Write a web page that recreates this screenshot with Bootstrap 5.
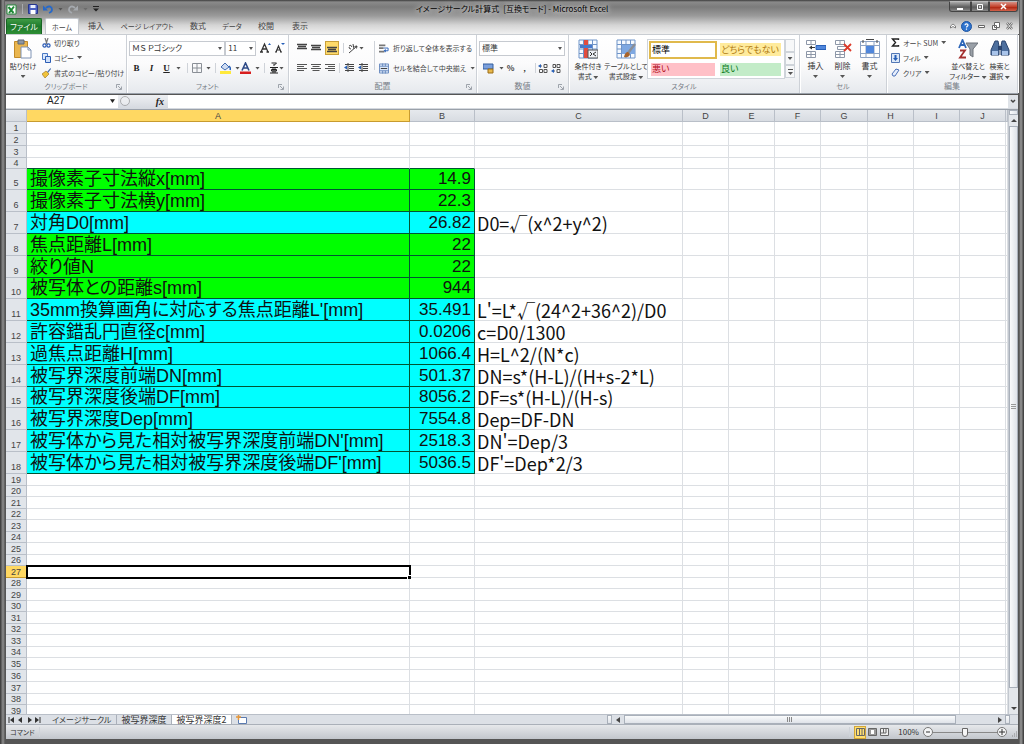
<!DOCTYPE html>
<html lang="ja">
<head>
<meta charset="utf-8">
<meta name="viewport" content="width=device-width, initial-scale=1">
<title>イメージサークル計算式 - Microsoft Excel</title>
<link href="https://cdn.jsdelivr.net/npm/bootstrap@5.3.0/dist/css/bootstrap.min.css" rel="stylesheet">
<style>
:root{--ui:"Noto Sans CJK JP",sans-serif;--line:#b4bac3}
body{font-family:var(--ui);font-size:8px;line-height:10px;color:#333;font-feature-settings:"palt";background:#4a4a4a}
button,input,select{font:inherit;font-feature-settings:inherit;color:inherit}
svg{display:block;flex:none}
.frame{padding:0 6px 5px;background:linear-gradient(90deg,#333 0,#8f8f8f 3px,#555 5px,#555 calc(100% - 5px),#999 calc(100% - 3px),#333)}
.tool{display:inline-flex;align-items:center;justify-content:center;flex:none;border:0;padding:0;background:none;white-space:nowrap;text-decoration:none;color:#444}
.tight{font-size:7px}
.caret{width:5px;height:3px;background:#555;clip-path:polygon(0 0,100% 0,50% 100%);flex:none;display:inline-block}
.cslot{width:9px;height:12px}
.vsep{width:1px;height:10px;background:#cfd3d9;flex:none}
.serif{font-family:"Liberation Serif",serif;font-size:9px;font-weight:700;width:15px;color:#222}
/* title */
.chrome{background:linear-gradient(#3c3c3c 0,#8a8a8a 2px,#7b7b7b 7px,#9b9b9b 16px,#d4d4d4 25px,#f0f0f0 34px);margin:0 -1px;padding:0 1px}
.titlebar{height:18px}
.titletext{color:#000;text-shadow:0 0 4px #ddd,0 0 6px #ddd}
.qat{gap:5px;width:200px}
.winbtns{width:200px;align-self:flex-start;margin-top:1px}
.winbtns button{height:11px;width:18px;background:linear-gradient(#aaa,#666 50%,#555 51%,#888);border:1px solid #444;border-top-color:#bbb}
.winbtns button:first-child{width:22px;border-radius:0 0 0 3px}
.winbtns .shut{width:29px;background:linear-gradient(#d79287,#c4442e 50%,#a91e0b 51%,#d2614a);border-radius:0 0 3px 0}
.tabs{height:16px}
.tabs>.tool{width:34px;height:16px}
.tabs>.wide{width:68px}
.tabs>.file{width:36px;background:linear-gradient(#3f9b45,#1d7a2c 50%,#2f8f35);color:#fff;border:1px solid #176423;border-bottom:0;border-radius:2px 2px 0 0;margin-right:3px}
.tabs>.on{background:#fff;border-radius:2px 2px 0 0;border:1px solid #c5c9cf;border-bottom:0}
/* ribbon */
.ribbon{background:linear-gradient(#fff,#fbfbfc 50%,#e6e9ed);border-top:1px solid #c9cdd2;border-bottom:1px solid #9aa1aa;height:60px}
.grp{border-right:1px solid #cdd1d7;box-shadow:1px 0 #fff;display:flex;flex-direction:column;flex:none}
.grp-body{height:45px;padding:6px 3px 0 2px}
.grp-name{height:11px;color:#777d86;display:flex;align-items:center;justify-content:center;position:relative}
.corner{position:absolute;right:4px;top:4px;width:6px;height:6px}
.trow{display:flex;align-items:center;height:14px;margin-bottom:6px}
.small3{display:flex;align-items:center;height:15px;gap:3px}
.big{flex-direction:column;justify-content:flex-start;color:#333;line-height:10px}
.big svg{margin-bottom:2px}
.combo{height:15px;min-height:0;border:1px solid #c6cad0;border-radius:0;padding:0 8px 0 2px;font-size:8px;line-height:12px;background:#fff url("data:image/svg+xml,%3Csvg xmlns='http://www.w3.org/2000/svg' viewBox='0 0 4 3'%3E%3Cpath d='M0 0h4L2 3z' fill='%23555'/%3E%3C/svg%3E") no-repeat right 2px center/4px 3px;appearance:none}
.gallery{border:1px solid #cfd4da;background:#fff;display:grid;grid-template-columns:68px 65px;column-gap:1px;row-gap:1px;align-items:center;padding:0 1px;width:138px;height:40px}
.gallery button{border:2px solid transparent;padding:0 1px;text-align:left;font-size:9px;line-height:12px;height:17px;background-clip:padding-box;white-space:nowrap}
.gallery .sel{border-color:#e0b94c;height:18px;background:#fff;color:#000}
.gallery .neutral{background-color:#ffeb9c;color:#b07a10}
.gallery .bad{background-color:#ffc0c7;color:#b30f1c}
.gallery .good{background-color:#c3ecc8;color:#0c7a1c}
.galbar button{height:13px;width:10px;border:1px solid #cfd4da;background:#f7f8f9}
/* formula bar */
.fbar{height:13px;margin-top:1px;background:#dfe3e8}
.fbar input{border:0;padding:0;background:#fff;min-width:0;border-radius:0}
.fbar .namebox{width:112px;text-align:center;padding-right:12px;font:10px/12px "Liberation Sans",sans-serif;color:#222;background:#fff url("data:image/svg+xml,%3Csvg xmlns='http://www.w3.org/2000/svg' viewBox='0 0 4 3'%3E%3Cpath d='M0 0h4L2 3z' fill='%23222'/%3E%3C/svg%3E") no-repeat right 3px center/5px 4px}
.fxarea{width:50px;background:linear-gradient(#eef0f3,#d6dae0);padding:0 4px 0 2px}
.fxarea .tool{font:italic bold 10px "Liberation Serif",serif;color:#222}
.strip{height:1px;background:#d5d9df}
/* sheet */
.sheetwrap{border-top:1px solid #9aa1aa;background:#fff;min-height:0}
.sheet{table-layout:fixed;border-collapse:separate;border-spacing:0;width:100%}
.sheet th,.sheet td{padding:0;border:0 solid #dcdfe3;border-width:0 1px 1px 0;white-space:nowrap;line-height:10px}
.sheet th{background:#e1e5ea;border-color:#b9bfc8;font:9px/9px "Liberation Sans",sans-serif;color:#444;text-align:center;vertical-align:bottom;overflow:hidden}
.sheet thead th{height:12px;background:linear-gradient(#e6e9ed,#d8dce2)}
.sheet .hot{background:#ffd862!important;border-color:#c79b2f}
.sheet tbody tr{height:12px}
.sheet tbody tr:nth-child(even){height:11px}
.sheet tbody tr:nth-child(2),.sheet tbody tr:nth-child(36){height:12px}
.sheet tbody tr.calc{height:22px}
.sheet tbody tr.calc:nth-child(5n){height:21px}
.sheet .calc th{padding-bottom:1px}
.sheet .calc td{font-size:18px;line-height:20px;color:#111;vertical-align:bottom}
.sheet .calc .label-cell{font-family:"Liberation Sans","Noto Sans CJK JP",sans-serif;padding-left:3px;border-color:#053}
.sheet .calc .num-cell{font-family:"Liberation Sans",sans-serif;font-size:17px;text-align:right;padding-right:3px;border-color:#053}
.sheet .calc .form-cell{padding-left:2px}
.given .label-cell,.given .num-cell{background:#0f0}
.derived .label-cell,.derived .num-cell{background:#0ff}
.sheet .edge td:nth-child(2),.sheet .edge td:nth-child(3){border-bottom-color:#053}
.sheet .picked{outline:2px solid #000;outline-offset:-1px;position:relative}
.picked::after{content:"";position:absolute;right:-2px;bottom:-2px;width:4px;height:4px;background:#000;border:solid #fff;border-width:1px 0 0 1px}
.vbar{width:10px;background:#e4e7eb;border-left:1px solid #c3c8cf}
.knob{border:1px solid #a9b0ba;background:linear-gradient(90deg,#fafbfc,#dfe3e9)}
.hknob{border:1px solid #a9b0ba;background:linear-gradient(#fafbfc,#dfe3e9)}
.bottombar{height:10px;background:#dce0e6;border-top:1px solid #b9bfc8}
.stab{height:9px;padding:0 5px 0 4px;color:#333;border-right:1px solid #aab0ba;font-size:9px}
.stab.long{font-size:8px}
.stab.on{background:#fff}
.hscroll{width:411px}
.status{height:15px;background:linear-gradient(#e6e8eb,#c2c6cc);border-top:1px solid #aab0b9}
.view{width:12px;height:13px}
.view.on{background:#ffdf72;border:1px solid #d2a637}
.zoomer{appearance:none;width:64px;height:10px;background:linear-gradient(#888,#888) center/100% 1px no-repeat;margin:0}
.zoomer::-webkit-slider-thumb{appearance:none;width:6px;height:9px;background:#f6f6f6;border:1px solid #666;border-radius:0 0 3px 3px}
.round-btn{width:10px;height:10px;border:1px solid #777;border-radius:50%;background:#f4f5f6}
</style>
</head>
<body>
<svg width="0" height="0" class="position-absolute" aria-hidden="true">
<symbol id="i-left" viewBox="0 0 10 10"><path d="M0 1.5h10M0 3.5h7M0 5.5h10M0 7.5h7" stroke="#555"/></symbol>
<symbol id="i-center" viewBox="0 0 10 10"><path d="M0 1.5h10M1.5 3.5h7M0 5.5h10M1.5 7.5h7" stroke="#555"/></symbol>
<symbol id="i-right" viewBox="0 0 10 10"><path d="M0 1.5h10M3 3.5h7M0 5.5h10M3 7.5h7" stroke="#555"/></symbol>
<symbol id="i-three" viewBox="0 0 10 10"><path d="M0 2.5h10M1 4.500h8M0 6.500h10" stroke="#444" stroke-width="1.400"/></symbol>
<symbol id="i-indent" viewBox="0 0 10 10"><path d="M1 1.5h9M5 3.5h5M5 5.5h5M1 7.5h9M4 0v9" stroke="#444"/><path d="M0 4.5l3-2v4z" fill="#2860b8"/></symbol>
<symbol id="i-corner" viewBox="0 0 6 6"><path d="M.5 4V.5H4M2 2l3 3M5.5 2.5v3h-3" fill="none" stroke="#8a9099" stroke-width=".8"/></symbol>
<symbol id="i-grid" viewBox="0 0 20 20"><path d="M1 1h18v18H1z" fill="#f6faff"/><path d="M1 1h18v18H1zM1 5.5h18M1 10h18M1 14.5h18M5.5 1v18M10 1v18M14.5 1v18" fill="none" stroke="#6f94c8"/></symbol>
</svg>

<div class="frame vh-100 d-flex flex-column overflow-hidden">
<header class="chrome">
  <div class="titlebar d-flex align-items-center justify-content-between">
    <div class="qat d-flex align-items-center">
      <svg width="11" height="11" viewBox="0 0 11 11"><path d="M1 1h9v9H1z" fill="#fff" stroke="#2b8a3e"/><path d="M2.5 3l5 6M8 2.5l-5 6.5" stroke="#1f8a36" stroke-width="2"/></svg>
      <span class="vsep opacity-50"></span>
      <button class="tool" aria-label="保存"><svg width="10" height="10" viewBox="0 0 10 10"><path d="M.5.5h8l1 1v8h-9z" fill="#4a5fc0" stroke="#27368c"/><path d="M2.5 1h5v3h-5z" fill="#e9eefc"/><path d="M2.5 6h5v4h-5z" fill="#fff"/></svg></button>
      <button class="tool" aria-label="元に戻す"><svg width="10" height="10" viewBox="0 0 10 10"><path d="M3 4c3-3 6-1 6 1.500S7 8.500 6 9" fill="none" stroke="#2769c9" stroke-width="1.800"/><path d="M0 1.500v5h5z" fill="#2769c9"/></svg></button>
      <span class="caret"></span>
      <button class="tool" aria-label="やり直し"><svg width="10" height="10" viewBox="0 0 10 10"><path d="M7 4C4 1 1 3 1 5.500S3 8.500 4 9" fill="none" stroke="#a5a9ae" stroke-width="1.800"/><path d="M10 1.500v5H5z" fill="#a5a9ae"/></svg></button>
      <span class="caret opacity-50"></span>
      <button class="tool" aria-label="カスタマイズ"><svg width="6" height="6" viewBox="0 0 6 6"><path d="M0 .5h6" stroke="#222"/><path d="M0 2.500h6l-3 3z" fill="#222"/></svg></button>
    </div>
    <div class="titletext">イメージサークル計算式&ensp;[互換モード] - Microsoft Excel</div>
    <div class="winbtns d-flex justify-content-end">
      <button class="tool" aria-label="最小化"><svg width="8" height="8"><path d="M1 5h6v2H1z" fill="#fff"/></svg></button>
      <button class="tool" aria-label="元のサイズに戻す"><svg width="8" height="8"><path d="M1.500 1.500h5v5h-5z" fill="none" stroke="#fff"/><path d="M3.500 3.500h1v1h-1z" stroke="#fff"/></svg></button>
      <button class="tool shut" aria-label="閉じる"><svg width="7" height="7"><path d="M1 1l5 5M6 1L1 6" stroke="#fff" stroke-width="1.500"/></svg></button>
    </div>
  </div>
  <nav class="tabs d-flex">
    <button class="tool file">ファイル</button><a href="#" class="tool on tight">ホーム</a><a href="#" class="tool">挿入</a><a href="#" class="tool wide tight">ページ レイアウト</a><a href="#" class="tool">数式</a><a href="#" class="tool tight">データ</a><a href="#" class="tool">校閲</a><a href="#" class="tool">表示</a>
    <div class="ms-auto d-flex align-items-center gap-1 pe-1">
      <button class="tool" aria-label="リボンの最小化"><svg width="8" height="8"><path d="M1.500 6V4L4 2l2.500 2v2L4 4.500z" fill="#fff" stroke="#666" stroke-width=".8"/></svg></button>
      <button class="tool" aria-label="ヘルプ"><svg width="11" height="11"><circle cx="5.500" cy="5.500" r="5" fill="#2f74ce" stroke="#1e54a0"/><path d="M4 4.300C4 2.500 7 2.500 7 4.200 7 5.300 5.500 5.300 5.500 6.500M5.500 7.500v1.200" fill="none" stroke="#fff" stroke-width="1.200"/></svg></button>
      <button class="tool" aria-label="ブックの最小化"><svg width="11" height="8"><path d="M2.500 3.500h6v2h-6z" fill="#fff" stroke="#666"/></svg></button>
      <button class="tool" aria-label="ブックを元に戻す"><svg width="10" height="9"><path d="M3.500.5h5v5h-5zM1.500 3.500h4v4h-4z" fill="#fff" stroke="#666"/></svg></button>
      <button class="tool" aria-label="ブックを閉じる"><svg width="9" height="8"><path d="M2 1l5 6M7 1L2 7" stroke="#666" stroke-width="2.400"/><path d="M2 1l5 6M7 1L2 7" stroke="#fff" stroke-width=".8"/></svg></button>
    </div>
  </nav>
</header>

<section class="ribbon d-flex">
  <div class="grp" style="width:121px">
    <div class="grp-body d-flex pt-0 tight">
      <button class="tool big pt-1" style="width:30px"><svg width="20" height="20" viewBox="0 0 20 20"><path d="M1.500 2.500h13v16h-13z" fill="#eab64f" stroke="#c28b2a"/><path d="M5 1h6v4H5z" fill="#8d97a5" stroke="#5f6977"/><path d="M8 8h7l3 3v8H8z" fill="#fff" stroke="#7f93b5"/><path d="M15 8v3h3" fill="none" stroke="#7f93b5"/></svg>貼り付け<span class="caret mt-1"></span></button>
      <div class="ps-1">
        <button class="tool small3"><svg width="9" height="10" viewBox="0 0 9 10"><path d="M3 0l2 6M6 0L4 6" stroke="#777" stroke-width="1.200"/><circle cx="2.500" cy="7.500" r="1.600" fill="none" stroke="#2a5ab5" stroke-width="1.200"/><circle cx="6.500" cy="7.500" r="1.600" fill="none" stroke="#2a5ab5" stroke-width="1.200"/></svg>切り取り</button>
        <button class="tool small3"><svg width="9" height="10" viewBox="0 0 9 10"><path d="M.5.5h5v6h-5z" fill="#dbe8fb" stroke="#4a78c4"/><path d="M3.500 3.500h5v6h-5z" fill="#cfe0fa" stroke="#2c5db5"/></svg>コピー <span class="caret"></span></button>
        <button class="tool small3"><svg width="9" height="10" viewBox="0 0 9 10"><path d="M8.500 0L5 4l1 1 3-4z" fill="#4a6fae"/><path d="M0 6l4-3 3 3-4 4z" fill="#f0c33c" stroke="#9b6d16" stroke-width=".6"/></svg>書式のコピー/貼り付け</button>
      </div>
    </div>
    <div class="grp-name tight">クリップボード<svg class="corner"><use href="#i-corner"/></svg></div>
  </div>

  <div class="grp" style="width:162px">
    <div class="grp-body">
      <div class="trow">
        <select class="combo" style="width:98px" aria-label="フォント名"><option>ＭＳ Ｐゴシック</option></select>
        <select class="combo" style="width:31px" aria-label="フォント サイズ"><option>11</option></select>
        <button class="tool ms-1" aria-label="拡大"><svg width="11" height="12" viewBox="0 0 11 12"><path d="M1 10L4.500 2 8 10M2.500 7h4M0 10h3M6.500 10H9" fill="none" stroke="#333" stroke-width="1.300"/><path d="M8 3l1.500-2L11 3z" fill="#2860b8"/></svg></button>
        <button class="tool ms-1" aria-label="縮小"><svg width="10" height="12" viewBox="0 0 10 12"><path d="M1 10L3.500 4 6 10M2 8h3M0 10h2M5 10h2" fill="none" stroke="#333" stroke-width="1.200"/><path d="M6 1h4L8 3z" fill="#2860b8"/></svg></button>
      </div>
      <div class="trow">
        <button class="tool serif">B</button>
        <button class="tool serif fst-italic">I</button>
        <button class="tool serif text-decoration-underline">U</button>
        <button class="tool cslot" aria-label="下線"><span class="caret"></span></button><span class="vsep mx-1"></span>
        <button class="tool" aria-label="罫線"><svg width="10" height="10"><path d="M.5.5h9v9h-9zM5 0v10M0 5h10" fill="none" stroke="#8a8f96"/></svg><span class="caret ms-1"></span></button><span class="vsep mx-1"></span>
        <button class="tool" aria-label="塗りつぶし"><svg width="11" height="12" viewBox="0 0 11 12"><path d="M0 9h11v3H0z" fill="#ffe93b"/><path d="M1 5l4-4 4 4-4 3z" fill="#cfdcf2" stroke="#416bb0"/><path d="M9 4q2 2 1 4" fill="none" stroke="#2860b8" stroke-width="1.500"/></svg><span class="caret ms-1"></span></button>
        <button class="tool" aria-label="文字の色"><svg width="11" height="12" viewBox="0 0 11 12"><path d="M0 9.500h11V12H0z" fill="#d81e1e"/><path d="M2 8.500L5.500 1 9 8.500M3.500 6h4" fill="none" stroke="#2e4a86" stroke-width="1.600"/></svg><span class="caret ms-1"></span></button><span class="vsep mx-1"></span>
        <button class="tool" aria-label="ふりがな"><svg width="10" height="12" viewBox="0 0 10 12"><path d="M2.500 1h5L5.500 3M5 2v2M1 5.500h8M1 11h8M2.500 7.500h5v1.500h-5zM4 5.500V11M6 5.500V11" fill="none" stroke="#222"/></svg><span class="caret"></span></button>
      </div>
    </div>
    <div class="grp-name tight">フォント<svg class="corner"><use href="#i-corner"/></svg></div>
  </div>

  <div class="grp" style="width:188px">
    <div class="grp-body d-flex ps-1">
      <div class="flex-shrink-0" style="width:81px">
        <div class="trow ps-1">
          <button class="tool me-1" aria-label="上揃え"><svg width="10" height="12" viewBox="0 1 10 10"><use href="#i-three" width="10" height="10"/></svg></button>
          <button class="tool me-1" aria-label="上下中央揃え"><svg width="10" height="10"><use href="#i-three"/></svg></button>
          <button class="tool" aria-label="下揃え" style="width:14px;height:14px;background:#ffdb6b;border:1px solid #c9a03a"><svg width="10" height="10" viewBox="0 -2 10 10"><use href="#i-three" width="10" height="10"/></svg></button><span class="vsep mx-1"></span>
          <button class="tool" aria-label="方向"><svg width="11" height="11" viewBox="0 0 11 11"><path d="M1 10L9 3M9 3L6.500 3.500M9 3l-.5 2.500M1 3q2-2 3 1M3 6q-2 0-2-2M5 1l1 5" fill="none" stroke="#444"/></svg><span class="caret"></span></button>
        </div>
        <div class="trow ps-1">
          <button class="tool me-1" aria-label="左揃え"><svg width="10" height="10"><use href="#i-left"/></svg></button>
          <button class="tool me-1" aria-label="中央揃え"><svg width="10" height="10"><use href="#i-center"/></svg></button>
          <button class="tool me-1" aria-label="右揃え"><svg width="10" height="10"><use href="#i-right"/></svg></button><span class="vsep me-1"></span>
          <button class="tool me-1" aria-label="インデントを減らす"><svg width="10" height="10"><use href="#i-indent"/></svg></button>
          <button class="tool" aria-label="インデントを増やす"><svg width="10" height="10"><use href="#i-indent"/></svg></button>
        </div>
      </div>
      <span class="vsep h-75 me-1"></span>
      <div class="tight">
        <div class="trow"><button class="tool"><svg class="me-1" width="10" height="11" viewBox="0 0 11 11"><path d="M0 2h7M0 5h5M0 9h6" stroke="#777" stroke-width="2"/><path d="M5 5h5v3H7" fill="none" stroke="#2860b8"/><path d="M7.500 6v4L5 8z" fill="#2860b8"/></svg>折り返して全体を表示する</button></div>
        <div class="trow"><button class="tool"><svg class="me-1" width="10" height="11" viewBox="0 0 11 11"><path d="M.5.5h10v10H.5zM0 3h11M0 8h11M4 0v3M7 0v3M4 8v3M7 8v3" fill="#dce8f8" stroke="#6487bd"/><path d="M2 5.500h7" stroke="#333"/></svg>セルを結合して中央揃え<span class="caret ms-1"></span></button></div>
      </div>
    </div>
    <div class="grp-name">配置<svg class="corner"><use href="#i-corner"/></svg></div>
  </div>

  <div class="grp" style="width:92px">
    <div class="grp-body">
      <div class="trow"><select class="combo w-100" aria-label="表示形式"><option>標準</option></select></div>
      <div class="trow justify-content-between px-1">
        <button class="tool" aria-label="通貨"><svg width="12" height="11" viewBox="0 0 12 11"><path d="M0 1h10v5H0z" fill="#7ba0dc" stroke="#355f9f"/><path d="M5 6h5v4H5z" fill="#e8b84a" stroke="#9b6d16"/></svg><span class="caret ms-1"></span></button>
        <button class="tool fw-bold">%</button><button class="tool serif">,</button><span class="vsep"></span>
        <button class="tool" aria-label="小数点を増やす"><svg width="10" height="11" viewBox="0 0 10 11"><path d="M0 3l3-2v4z" fill="#2860b8"/><path d="M3 3h1M6 1.500h3v3H6zM1.500 6.500h3v3h-3zM6 6.500h3v3H6z" fill="none" stroke="#555"/></svg></button>
        <button class="tool" aria-label="小数点を減らす"><svg width="10" height="11" viewBox="0 0 10 11"><path d="M0 8l3-2v4z" fill="#2860b8"/><path d="M3 8h1M2 1.500h2.500v3H2zM6 1.500h3v3H6zM6 6.500h3v3H6z" fill="none" stroke="#555"/></svg></button>
      </div>
    </div>
    <div class="grp-name">数値<svg class="corner"><use href="#i-corner"/></svg></div>
  </div>

  <div class="grp" style="width:231px">
    <div class="grp-body d-flex pt-1 pe-0">
      <button class="tool big tight" style="width:34px"><svg width="20" height="20" viewBox="0 0 20 20"><use href="#i-grid"/><path d="M6 1h4v18H6z" fill="#e14c3f"/><path d="M2 6h12v3H2z" fill="#4779cc"/><path d="M10 11h10v8H10z" fill="#eef1f6" stroke="#555"/><path d="M12 13l2 2-2 2M18 13l-3 2 3 2" fill="none" stroke="#333"/></svg>条件付き<span>書式 <span class="caret"></span></span></button>
      <button class="tool big tight" style="width:42px"><svg width="20" height="20" viewBox="0 0 20 20"><use href="#i-grid"/><path d="M6 6h13v9H6z" fill="#7ea8e2"/><path d="M19 5l-7 9" stroke="#8a8f98" stroke-width="2.500"/><path d="M8 18q1-5 4-5l2 2q-1 4-6 3z" fill="#a8632a"/></svg>テーブルとして<span>書式設定 <span class="caret"></span></span></button>
      <div class="gallery">
        <button class="sel">標準</button><button class="neutral">どちらでもない</button>
        <button class="bad">悪い</button><button class="good">良い</button>
      </div>
      <div class="galbar d-flex flex-column">
        <button class="tool" aria-label="上へ"></button><button class="tool" aria-label="下へ"><span class="caret"></span></button><button class="tool" aria-label="その他"><svg width="5" height="6"><path d="M0 .5h5" stroke="#555"/><path d="M0 3h5L2.500 6z" fill="#555"/></svg></button>
      </div>
    </div>
    <div class="grp-name tight">スタイル</div>
  </div>

  <div class="grp" style="width:87px">
    <div class="grp-body d-flex pt-1">
      <button class="tool big" style="width:27px"><svg width="20" height="20" viewBox="0 0 20 20"><path d="M.5 1.500h9v4h-9zM.5 12.500h9v6h-9zM5 1v4M5 12v7M0 15.500h10" fill="#fff" stroke="#8d97a8"/><path d="M10 6.500h10v4H10z" fill="#4f86dc" stroke="#2860b8"/><path d="M9 8.500H5" stroke="#333"/><path d="M3 8.500l3-2v4z" fill="#333"/></svg>挿入<span class="caret mt-1"></span></button>
      <button class="tool big" style="width:27px"><svg width="20" height="20" viewBox="0 0 20 20"><path d="M2.500 1.500h9v4h-9zM4.500 7.500h9v3h-9zM2.500 12.500h9v6h-9zM7 1v4M7 12v7M2 15.500h10" fill="#fff" stroke="#8d97a8"/><path d="M11 5l7 7M18 5l-7 7" stroke="#dd3a2a" stroke-width="1.800"/></svg>削除<span class="caret mt-1"></span></button>
      <button class="tool big" style="width:27px"><svg width="20" height="20" viewBox="0 0 20 20"><path d="M.5 2.500h19v16H.500zM0 6.500h20M0 14.500h20M6 2v16M14 2v16" fill="#fff" stroke="#8da3c4"/><path d="M6 7h8v7H6z" fill="#4f86dc"/><path d="M6 .5h8M3 1v3M17 1v3" stroke="#444"/></svg>書式<span class="caret mt-1"></span></button>
    </div>
    <div class="grp-name tight">セル</div>
  </div>

  <div class="grp flex-grow-1">
    <div class="grp-body d-flex pt-0 ps-1 tight">
      <div style="width:59px">
        <button class="tool small3"><svg width="9" height="9" viewBox="0 0 8 9"><path d="M7 2V1H1l3 3.500L1 8h6V7" fill="none" stroke="#222" stroke-width="1.400"/></svg>オート SUM<span class="caret"></span></button>
        <button class="tool small3"><svg width="9" height="10"><path d="M.5.500h8v9h-8z" fill="#dce8f8" stroke="#5277b5"/><path d="M3.500 2h2v3H7L4.500 8 2 5h1.500z" fill="#2860b8"/></svg>フィル<span class="caret"></span></button>
        <button class="tool small3"><svg width="9" height="9"><path d="M1 6l4-5 3 1-4 6H2z" fill="#e6eefc" stroke="#4a70b8"/></svg>クリア<span class="caret"></span></button>
      </div>
      <button class="tool big pt-1" style="width:36px"><svg width="20" height="20" viewBox="0 0 20 20"><path d="M1 9L4.500 1 8 9M2.500 6h4" fill="none" stroke="#2d66b8" stroke-width="1.800"/><path d="M2 11.500h5L2 18.500h6" fill="none" stroke="#a43030" stroke-width="1.800"/><path d="M8 4h12l-5 6v8l-3-2v-6z" fill="#9aa0a8" stroke="#6d737b"/></svg>並べ替えと<span>フィルター <span class="caret"></span></span></button>
      <button class="tool big pt-1" style="width:27px"><svg width="20" height="20" viewBox="0 0 20 20"><path d="M5 2h3l1 5v9H1v-5zM12 2h3l4 9v5h-8V7z" fill="#4d6f9e" stroke="#2a446e"/><path d="M8 7h4v4H8z" fill="#2a446e"/><path d="M2 12h6v4H2zM12 12h6v4h-6z" fill="#a9c4ea"/></svg>検索と<span>選択 <span class="caret"></span></span></button>
    </div>
    <div class="grp-name">編集</div>
  </div>
</section>

<section class="fbar d-flex flex-shrink-0">
  <input class="namebox" value="A27" aria-label="名前ボックス">
  <div class="fxarea d-flex align-items-center justify-content-between"><span class="round-btn opacity-50"></span><button class="tool">fx</button></div>
  <input class="flex-grow-1" aria-label="数式バー">
  <button class="tool" style="width:10px" aria-label="数式バーの展開"><svg width="6" height="5"><path d="M1 1l2 2 2-2" fill="none" stroke="#444" stroke-width="1.500"/></svg></button>
</section>
<div class="strip flex-shrink-0"></div>

<main class="sheetwrap d-flex flex-grow-1 overflow-hidden">
  <div class="flex-grow-1 overflow-hidden">
    <table class="sheet">
      <colgroup><col style="width:21px"><col style="width:383px"><col style="width:65px"><col style="width:208px"><col style="width:46px"><col style="width:46px"><col style="width:46px"><col style="width:47px"><col style="width:46px"><col style="width:46px"><col style="width:46px"><col></colgroup>
      <thead><tr><th></th><th class="hot">A</th><th>B</th><th>C</th><th>D</th><th>E</th><th>F</th><th>G</th><th>H</th><th>I</th><th>J</th><th></th></tr></thead>
      <tbody id="rows"></tbody>
    </table>
  </div>
  <div class="vbar d-flex flex-column align-items-center flex-shrink-0">
    <span class="knob w-100 flex-shrink-0" style="height:5px"></span>
    <svg width="8" height="11"><path d="M1 7h6L4 4z" fill="#444"/></svg>
    <div class="knob w-100 d-flex align-items-center justify-content-center" style="height:93%"><svg width="5" height="6"><path d="M0 .5h5M0 2.500h5M0 4.500h5" stroke="#999"/></svg></div>
    <svg class="mt-auto" width="8" height="11"><path d="M1 4h6L4 7z" fill="#444"/></svg>
  </div>
</main>

<footer class="flex-shrink-0">
  <div class="bottombar d-flex align-items-center">
    <svg width="38" height="8" class="me-1"><path d="M3 1v6M34 1v6" stroke="#333"/><path d="M8 1v6L4 4zM16 1v6l-4-3zM22 1v6l4-3zM29 1v6l4-3z" fill="#333"/></svg>
    <a href="#" class="tool stab long">イメージサークル</a><a href="#" class="tool stab">被写界深度</a><a href="#" class="tool stab on">被写界深度2</a>
    <button class="tool ms-1" aria-label="ワークシートの挿入"><svg width="12" height="9"><path d="M2.500 2.500h8v6h-8z" fill="#fff" stroke="#5b7bb0"/><path d="M0 2h5M2.500 0v5" stroke="#e5963a" stroke-width="1.500"/></svg></button>
    <div class="hscroll ms-auto d-flex align-items-center h-100">
      <span class="hknob h-100" style="width:5px"></span><svg width="12" height="8"><path d="M8 1v6L4 4z" fill="#444"/></svg>
      <div class="hknob h-100 d-flex align-items-center justify-content-center" style="width:332px"><svg width="6" height="5"><path d="M.5 0v5M2.500 0v5M4.500 0v5" stroke="#888"/></svg></div>
      <svg class="ms-auto" width="10" height="8"><path d="M3 1v6l4-3z" fill="#444"/></svg><span class="hknob h-100 me-2" style="width:5px"></span>
    </div>
  </div>
  <div class="status d-flex align-items-center ps-1">
    <span class="tight">コマンド</span><span class="vsep ms-1"></span>
    <span class="vsep ms-auto me-1"></span>
    <button class="tool view on" aria-label="標準"><svg width="9" height="8"><path d="M.5.500h8v7h-8zM3.500 0v8M6 0v8" fill="none" stroke="#666"/></svg></button>
    <button class="tool view" aria-label="ページ レイアウト"><svg width="9" height="8"><path d="M.5.500h8v7h-8z" fill="#999" stroke="#666"/><path d="M3 2h3v4H3z" fill="#fff"/></svg></button>
    <button class="tool view" aria-label="改ページ"><svg width="9" height="8"><path d="M.5.500h8v7h-8z" fill="#eee" stroke="#666"/><path d="M3.500 0v5M6 0v5H0" fill="none" stroke="#666"/></svg></button>
    <span class="ms-2 me-1">100%</span>
    <button class="tool round-btn" aria-label="縮小"><svg width="6" height="6"><path d="M1 3h4" stroke="#333"/></svg></button>
    <input type="range" class="zoomer" aria-label="ズーム">
    <button class="tool round-btn" aria-label="拡大"><svg width="6" height="6"><path d="M0 3h6M3 0v6" stroke="#333"/></svg></button>
    <svg class="ms-1 align-self-end" width="7" height="8"><path d="M5 1h1M3 3h1M5 3h1M1 5h1M3 5h1M5 5h1" stroke="#888"/></svg>
  </div>
</footer>
</div>

<script>
const calc = {
  5:['given','撮像素子寸法縦x[mm]','14.9',''],
  6:['given','撮像素子寸法横y[mm]','22.3',''],
  7:['derived','対角D0[mm]','26.82','D0=√(x^2+y^2)'],
  8:['given','焦点距離L[mm]','22',''],
  9:['given','絞り値N','22',''],
  10:['given','被写体との距離s[mm]','944',''],
  11:['derived',"35mm換算画角に対応する焦点距離L'[mm]",'35.491',"L'=L*√(24^2+36^2)/D0"],
  12:['derived','許容錯乱円直径c[mm]','0.0206','c=D0/1300'],
  13:['derived','過焦点距離H[mm]','1066.4','H=L^2/(N*c)'],
  14:['derived','被写界深度前端DN[mm]','501.37','DN=s*(H-L)/(H+s-2*L)'],
  15:['derived','被写界深度後端DF[mm]','8056.2','DF=s*(H-L)/(H-s)'],
  16:['derived','被写界深度Dep[mm]','7554.8','Dep=DF-DN'],
  17:['derived',"被写体から見た相対被写界深度前端DN'[mm]",'2518.3',"DN'=Dep/3"],
  18:['derived',"被写体から見た相対被写界深度後端DF'[mm]",'5036.5',"DF'=Dep*2/3"]
};
let html = '';
for (let r = 1; r <= 39; r++) {
  const c = calc[r], blank = '<td></td>';
  if (c) html += `<tr class="calc ${c[0]}"><th>${r}</th><td class="label-cell">${c[1]}</td><td class="num-cell">${c[2]}</td><td class="form-cell">${c[3]}</td>${blank.repeat(8)}</tr>`;
  else html += `<tr class="${r === 4 ? 'edge' : ''}"><th class="${r === 27 ? 'hot' : ''}">${r}</th><td class="${r === 27 ? 'picked' : ''}"></td>${blank.repeat(10)}</tr>`;
}
document.getElementById('rows').innerHTML = html;
</script>
<script src="https://cdn.jsdelivr.net/npm/bootstrap@5.3.0/dist/js/bootstrap.bundle.min.js"></script>
</body>
</html>
